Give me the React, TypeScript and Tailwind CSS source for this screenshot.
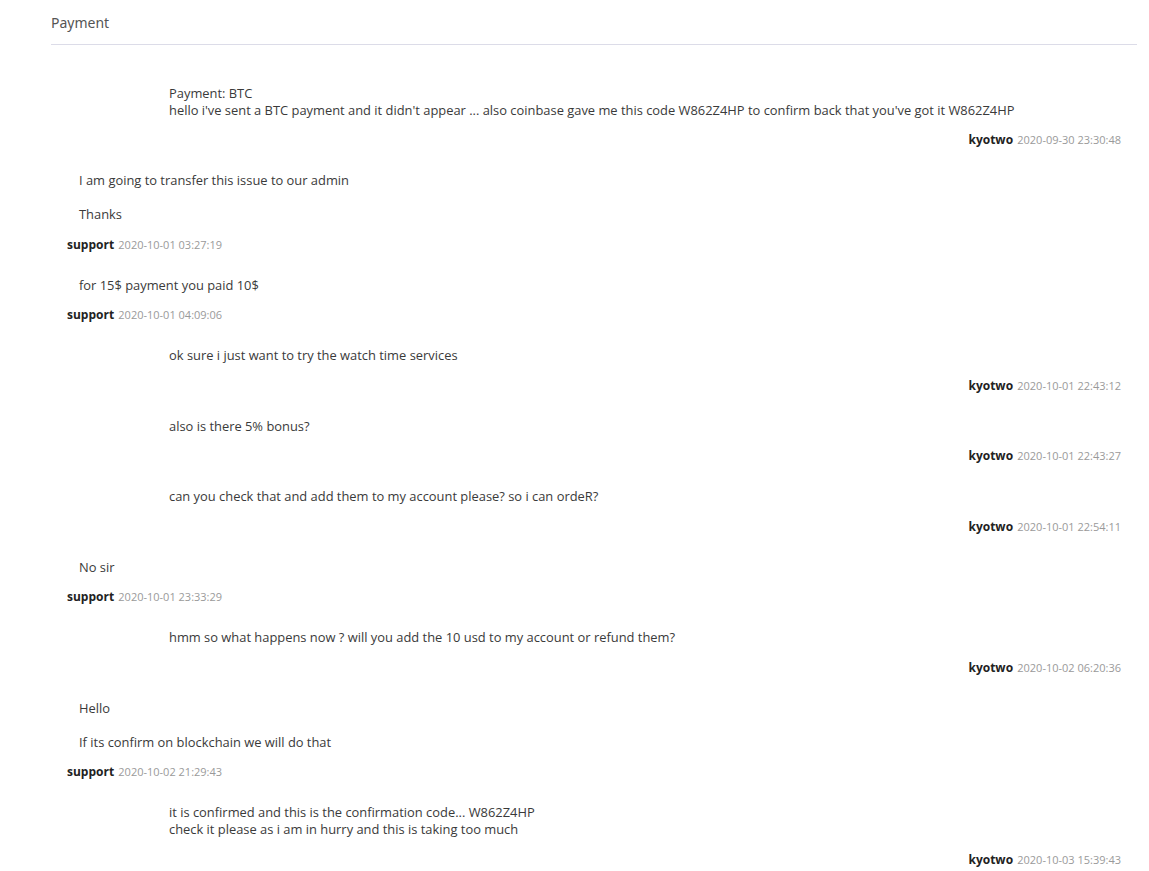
import React from "react";

type Msg = {
  from: "support" | "kyotwo";
  paras: string[][];
  time: string;
};

const messages: Msg[] = [
  {
    from: "kyotwo",
    paras: [
      [
        "Payment: BTC",
        "hello i've sent a BTC payment and it didn't appear ... also coinbase gave me this code W862Z4HP to confirm back that you've got it W862Z4HP",
      ],
    ],
    time: "2020-09-30 23:30:48",
  },
  {
    from: "support",
    paras: [["I am going to transfer this issue to our admin"], ["Thanks"]],
    time: "2020-10-01 03:27:19",
  },
  { from: "support", paras: [["for 15$ payment you paid 10$"]], time: "2020-10-01 04:09:06" },
  { from: "kyotwo", paras: [["ok sure i just want to try the watch time services"]], time: "2020-10-01 22:43:12" },
  { from: "kyotwo", paras: [["also is there 5% bonus?"]], time: "2020-10-01 22:43:27" },
  {
    from: "kyotwo",
    paras: [["can you check that and add them to my account please? so i can ordeR?"]],
    time: "2020-10-01 22:54:11",
  },
  { from: "support", paras: [["No sir"]], time: "2020-10-01 23:33:29" },
  {
    from: "kyotwo",
    paras: [["hmm so what happens now ? will you add the 10 usd to my account or refund them?"]],
    time: "2020-10-02 06:20:36",
  },
  {
    from: "support",
    paras: [["Hello"], ["If its confirm on blockchain we will do that"]],
    time: "2020-10-02 21:29:43",
  },
  {
    from: "kyotwo",
    paras: [
      [
        "it is confirmed and this is the confirmation code... W862Z4HP",
        "check it please as i am in hurry and this is taking too much",
      ],
    ],
    time: "2020-10-03 15:39:43",
  },
];

function Message({ msg }: { msg: Msg }) {
  const mine = msg.from === "kyotwo";
  return (
    <div className="mt-[25px] first:mt-0">
      <div className={mine ? "pl-[118px] pr-4" : "pl-[28px] pr-4"}>
        {msg.paras.map((p, i) => (
          <p key={i} className="mt-[17px] first:mt-0 text-[12.9px] leading-[17px] text-[#3a3a3a]">
            {p.map((line, j) => (
              <span key={j} className="block">
                {line}
              </span>
            ))}
          </p>
        ))}
      </div>
      <div
        className={
          "mt-[11.5px] h-[17px] leading-[17px] " +
          (mine ? "pr-4 text-right" : "pl-4 text-left")
        }
      >
        <span className="text-[12px] font-bold text-[#222]">{msg.from}</span>{" "}
        <span className="text-[11px] text-[#9a9a9a]">{msg.time}</span>
      </div>
    </div>
  );
}

export default function App() {
  return (
    <div
      className="min-h-screen bg-white"
      style={{ fontFamily: '"Open Sans", "Noto Sans", sans-serif' }}
    >
      <div className="ml-[51px] w-[1086px]">
        <div className="flex h-[45px] items-center border-b border-[#dcdce8]">
          <h2
            className="text-[14px] text-[#555]"
            style={{ fontFamily: '"Noto Sans", sans-serif' }}
          >
            Payment
          </h2>
        </div>
        <div className="pt-[39.5px] pb-4">
          {messages.map((m, i) => (
            <Message key={i} msg={m} />
          ))}
        </div>
      </div>
    </div>
  );
}
